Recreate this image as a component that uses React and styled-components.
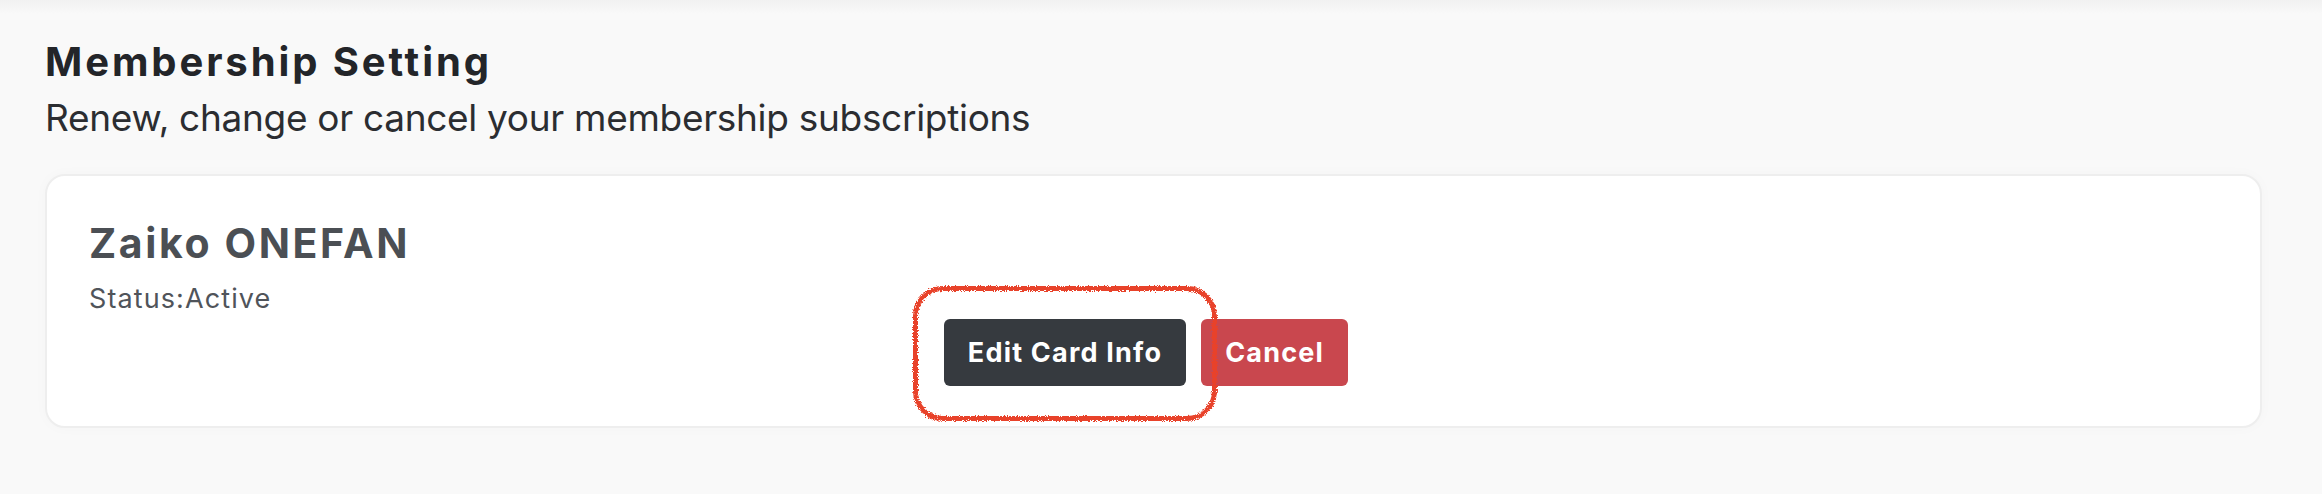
import styled, { createGlobalStyle } from "styled-components";

const GlobalStyle = createGlobalStyle`
  html, body {
    margin: 0;
    padding: 0;
    background: #f9f9f9;
  }
  body {
    font-family: Inter, "Noto Sans", sans-serif;
  }
`;

const App = () => {
  return (
    <Page>
      <GlobalStyle />
      <RoughFilter />
      <Title>Membership Setting</Title>
      <Subtitle>Renew, change or cancel your membership subscriptions</Subtitle>
      <Card>
        <PlanName>Zaiko ONEFAN</PlanName>
        <Status>Status:Active</Status>
        <Actions>
          <Highlighted>
            <Button $variant="dark">Edit Card Info</Button>
            <Scribble />
          </Highlighted>
          <Button $variant="danger">Cancel</Button>
        </Actions>
      </Card>
    </Page>
  );
};

export default App;

// hand-drawn look for the red annotation ring
const RoughFilter = () => (
  <svg width="0" height="0" style={{ position: "absolute" }}>
    <filter id="rough">
      <feTurbulence
        type="fractalNoise"
        baseFrequency="0.9"
        numOctaves="2"
        result="noise"
      />
      <feDisplacementMap
        in="SourceGraphic"
        in2="noise"
        scale="5"
        xChannelSelector="R"
        yChannelSelector="G"
      />
    </filter>
  </svg>
);

const Page = styled.main`
  min-height: 494px;
  box-sizing: border-box;
  padding: 38px 60px 40px 45px;
  background: linear-gradient(#f1f1f1 0, #f9f9f9 14px, #f9f9f9 100%);
`;

const Title = styled.h1`
  margin: 0;
  font-size: 40px;
  line-height: 1.2;
  font-weight: 700;
  color: #232529;
  letter-spacing: 2.9px;
`;

const Subtitle = styled.p`
  margin: 10px 0 0;
  font-size: 37px;
  line-height: 1.2;
  font-weight: 400;
  color: #2b2d31;
  letter-spacing: -0.3px;
`;

const Card = styled.section`
  margin-top: 34px;
  box-sizing: border-box;
  height: 254px;
  padding: 43px 42px 40px;
  background: #fff;
  border: 2px solid #eeeeee;
  border-radius: 20px;
  box-shadow: 0 0 14px rgba(0, 0, 0, 0.025);
  display: flex;
  flex-direction: column;
`;

const PlanName = styled.h2`
  margin: 0;
  font-size: 41px;
  line-height: 1.2;
  font-weight: 700;
  color: #4b4f54;
  letter-spacing: 2.6px;
`;

const Status = styled.div`
  margin-top: 14px;
  font-size: 27px;
  line-height: 1.2;
  color: #50545a;
  letter-spacing: 1.1px;
`;

const Actions = styled.div`
  margin-top: 4px;
  display: flex;
  justify-content: center;
`;

const Highlighted = styled.span`
  position: relative;
  display: inline-flex;
  margin-right: 15px;
`;

const Button = styled.button`
  height: 67px;
  padding: 0 24px;
  border: none;
  border-radius: 6px;
  font-family: Inter, "Noto Sans", sans-serif;
  font-size: 27px;
  font-weight: 700;
  letter-spacing: 1.2px;
  color: #fff;
  background: ${(p) => (p.$variant === "danger" ? "#c9474e" : "#363a3f")};
  margin-right: ${(p) => (p.$variant === "danger" ? "15px" : "0")};
  cursor: pointer;
`;

const Scribble = styled.span`
  position: absolute;
  top: -33px;
  right: -31px;
  bottom: -35px;
  left: -31px;
  border: 5px solid #e8432a;
  border-radius: 30px;
  filter: url(#rough);
  pointer-events: none;
  z-index: 2;
`;
